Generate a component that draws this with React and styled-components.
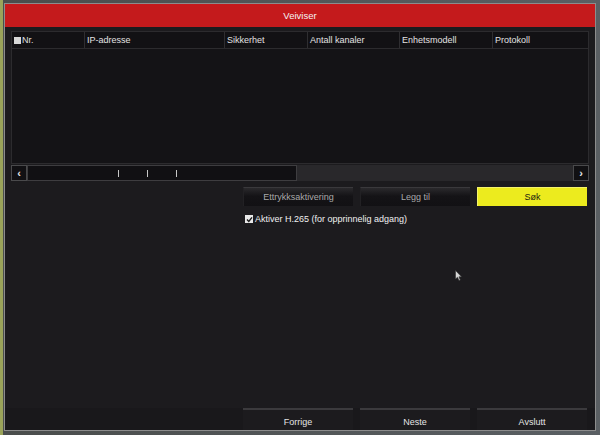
import styled, { createGlobalStyle } from 'styled-components';

const GlobalStyle = createGlobalStyle`
  html, body {
    margin: 0;
    padding: 0;
    width: 600px;
    height: 435px;
    overflow: hidden;
    background: linear-gradient(90deg, #9aa35a 0px, #9aa35a 3px, #4a4d4c 3px, #5a5f63 100%);
    font-family: "Liberation Sans", Arial, sans-serif;
  }
`;

const columns = [
  { label: 'Nr.', width: 73, check: true },
  { label: 'IP-adresse', width: 140 },
  { label: 'Sikkerhet', width: 83 },
  { label: 'Antall kanaler', width: 92 },
  { label: 'Enhetsmodell', width: 93 },
  { label: 'Protokoll', width: 95 },
];

const App = () => {
  return (
    <>
      <GlobalStyle />
      <Page>
        <Dialog>
          <TitleBar>Veiviser</TitleBar>
          <Body>
            <Table>
              <HeaderRow>
                {columns.map(({ label, width, check }) => (
                  <HeaderCell key={label} style={{ width }}>
                    {check && <Box />}
                    {label}
                  </HeaderCell>
                ))}
              </HeaderRow>
              <TableBody />
            </Table>
            <ScrollBar>
              <ArrowBtn>‹</ArrowBtn>
              <Thumb>
                <Tick />
                <Tick />
                <Tick />
              </Thumb>
              <Track />
              <ArrowBtn>›</ArrowBtn>
            </ScrollBar>
            <ActionRow>
              <Button>Ettrykksaktivering</Button>
              <Button>Legg til</Button>
              <Button $primary>Søk</Button>
            </ActionRow>
            <CheckRow>
              <CheckBox>
                <svg width="7" height="7" viewBox="0 0 7 7">
                  <path d="M1 3.6 L2.8 5.4 L6 1.4" stroke="#1a1a1a" strokeWidth="1.4" fill="none" />
                </svg>
              </CheckBox>
              Aktiver H.265 (for opprinnelig adgang)
            </CheckRow>
            <Spacer>
              <Cursor width="8" height="12" viewBox="0 0 8 12">
                <path d="M0.5 0.5 L0.5 9 L2.5 7.2 L4 10.5 L5.3 10 L3.9 6.8 L6.5 6.8 Z" fill="#d8d8d8" stroke="#333" strokeWidth="0.6" />
              </Cursor>
            </Spacer>
            <FooterRow>
              <FooterButton>Forrige</FooterButton>
              <FooterButton>Neste</FooterButton>
              <FooterButton>Avslutt</FooterButton>
            </FooterRow>
          </Body>
        </Dialog>
      </Page>
    </>
  );
};

const Page = styled.div`
  width: 600px;
  height: 435px;
  padding: 3px 0 0 4px;
  box-sizing: border-box;
`;

const Dialog = styled.div`
  width: 592px;
  height: 428px;
  display: flex;
  flex-direction: column;
  border: 1px solid #8c8c8c;
  box-sizing: border-box;
  background: #1c1b1e;
`;

const TitleBar = styled.div`
  height: 23px;
  flex-shrink: 0;
  background: #c41a1c;
  color: #f4f4f4;
  font-size: 9.5px;
  display: flex;
  align-items: center;
  justify-content: center;
`;

const Body = styled.div`
  flex: 1;
  display: flex;
  flex-direction: column;
  padding: 4px 6px 0 6px;
`;

const Table = styled.div`
  height: 131px;
  display: flex;
  flex-direction: column;
  background: #141316;
  border: 1px solid #2c2b2e;
`;

const HeaderRow = styled.div`
  height: 16px;
  display: flex;
  border-bottom: 1px solid #2c2b2e;
  background: #121114;
`;

const HeaderCell = styled.div`
  display: flex;
  align-items: center;
  gap: 1px;
  padding-left: 2px;
  box-sizing: border-box;
  color: #e2e2e2;
  font-size: 9px;
  border-right: 1px solid #2f2e31;
  &:last-child {
    border-right: none;
    flex: 1;
  }
`;

const Box = styled.span`
  width: 7px;
  height: 7px;
  background: #d8d8d8;
  display: inline-block;
`;

const TableBody = styled.div`
  flex: 1;
`;

const ScrollBar = styled.div`
  height: 16px;
  margin-top: 1px;
  display: flex;
  align-items: stretch;
`;

const ArrowBtn = styled.div`
  width: 14px;
  background: #111013;
  border: 1px solid #4a4a4c;
  color: #e8e8e8;
  font-size: 11px;
  font-weight: bold;
  display: flex;
  align-items: center;
  justify-content: center;
  line-height: 1;
`;

const Thumb = styled.div`
  width: 270px;
  background: #111013;
  border: 1px solid #3e3d40;
  display: flex;
  align-items: center;
  padding-left: 90px;
  gap: 28px;
  box-sizing: border-box;
`;

const Tick = styled.span`
  width: 1px;
  height: 7px;
  background: #c8c8c8;
`;

const Track = styled.div`
  flex: 1;
  background: #29282b;
`;

const ActionRow = styled.div`
  display: flex;
  justify-content: flex-end;
  gap: 7px;
  margin-top: 6px;
  padding-right: 2px;
`;

const Button = styled.div`
  width: 110px;
  height: 19px;
  box-sizing: border-box;
  display: flex;
  align-items: center;
  justify-content: center;
  font-size: 9px;
  background: ${({ $primary }) =>
    $primary ? '#eceb1e' : 'linear-gradient(180deg, #2a292c 0%, #141316 45%, #121114 100%)'};
  color: ${({ $primary }) => ($primary ? '#1a1a10' : '#a9a9a9')};
  border-top: 1px solid ${({ $primary }) => ($primary ? '#f4f36a' : '#3a393c')};
  border-left: 1px solid ${({ $primary }) => ($primary ? '#f4f36a' : '#222124')};
`;

const CheckRow = styled.div`
  margin: 8px 0 0 234px;
  display: flex;
  align-items: center;
  gap: 2px;
  color: #f0f0f0;
  font-size: 9px;
`;

const CheckBox = styled.span`
  width: 8px;
  height: 8px;
  background: #e8e8e8;
  display: inline-flex;
  align-items: center;
  justify-content: center;
`;

const Spacer = styled.div`
  flex: 1;
  position: relative;
`;

const Cursor = styled.svg`
  position: absolute;
  left: 444px;
  top: 46px;
`;

const FooterRow = styled.div`
  height: 22px;
  margin: 0 -6px;
  padding: 0 8px 0 0;
  display: flex;
  justify-content: flex-end;
  gap: 7px;
  background: #19181b;
`;

const FooterButton = styled.div`
  width: 110px;
  display: flex;
  align-items: center;
  justify-content: center;
  padding-top: 3px;
  box-sizing: border-box;
  font-size: 9px;
  color: #e4e4e4;
  background: #1c1b1e;
  border-top: 2px solid #3b3a3d;
`;

export default App;
